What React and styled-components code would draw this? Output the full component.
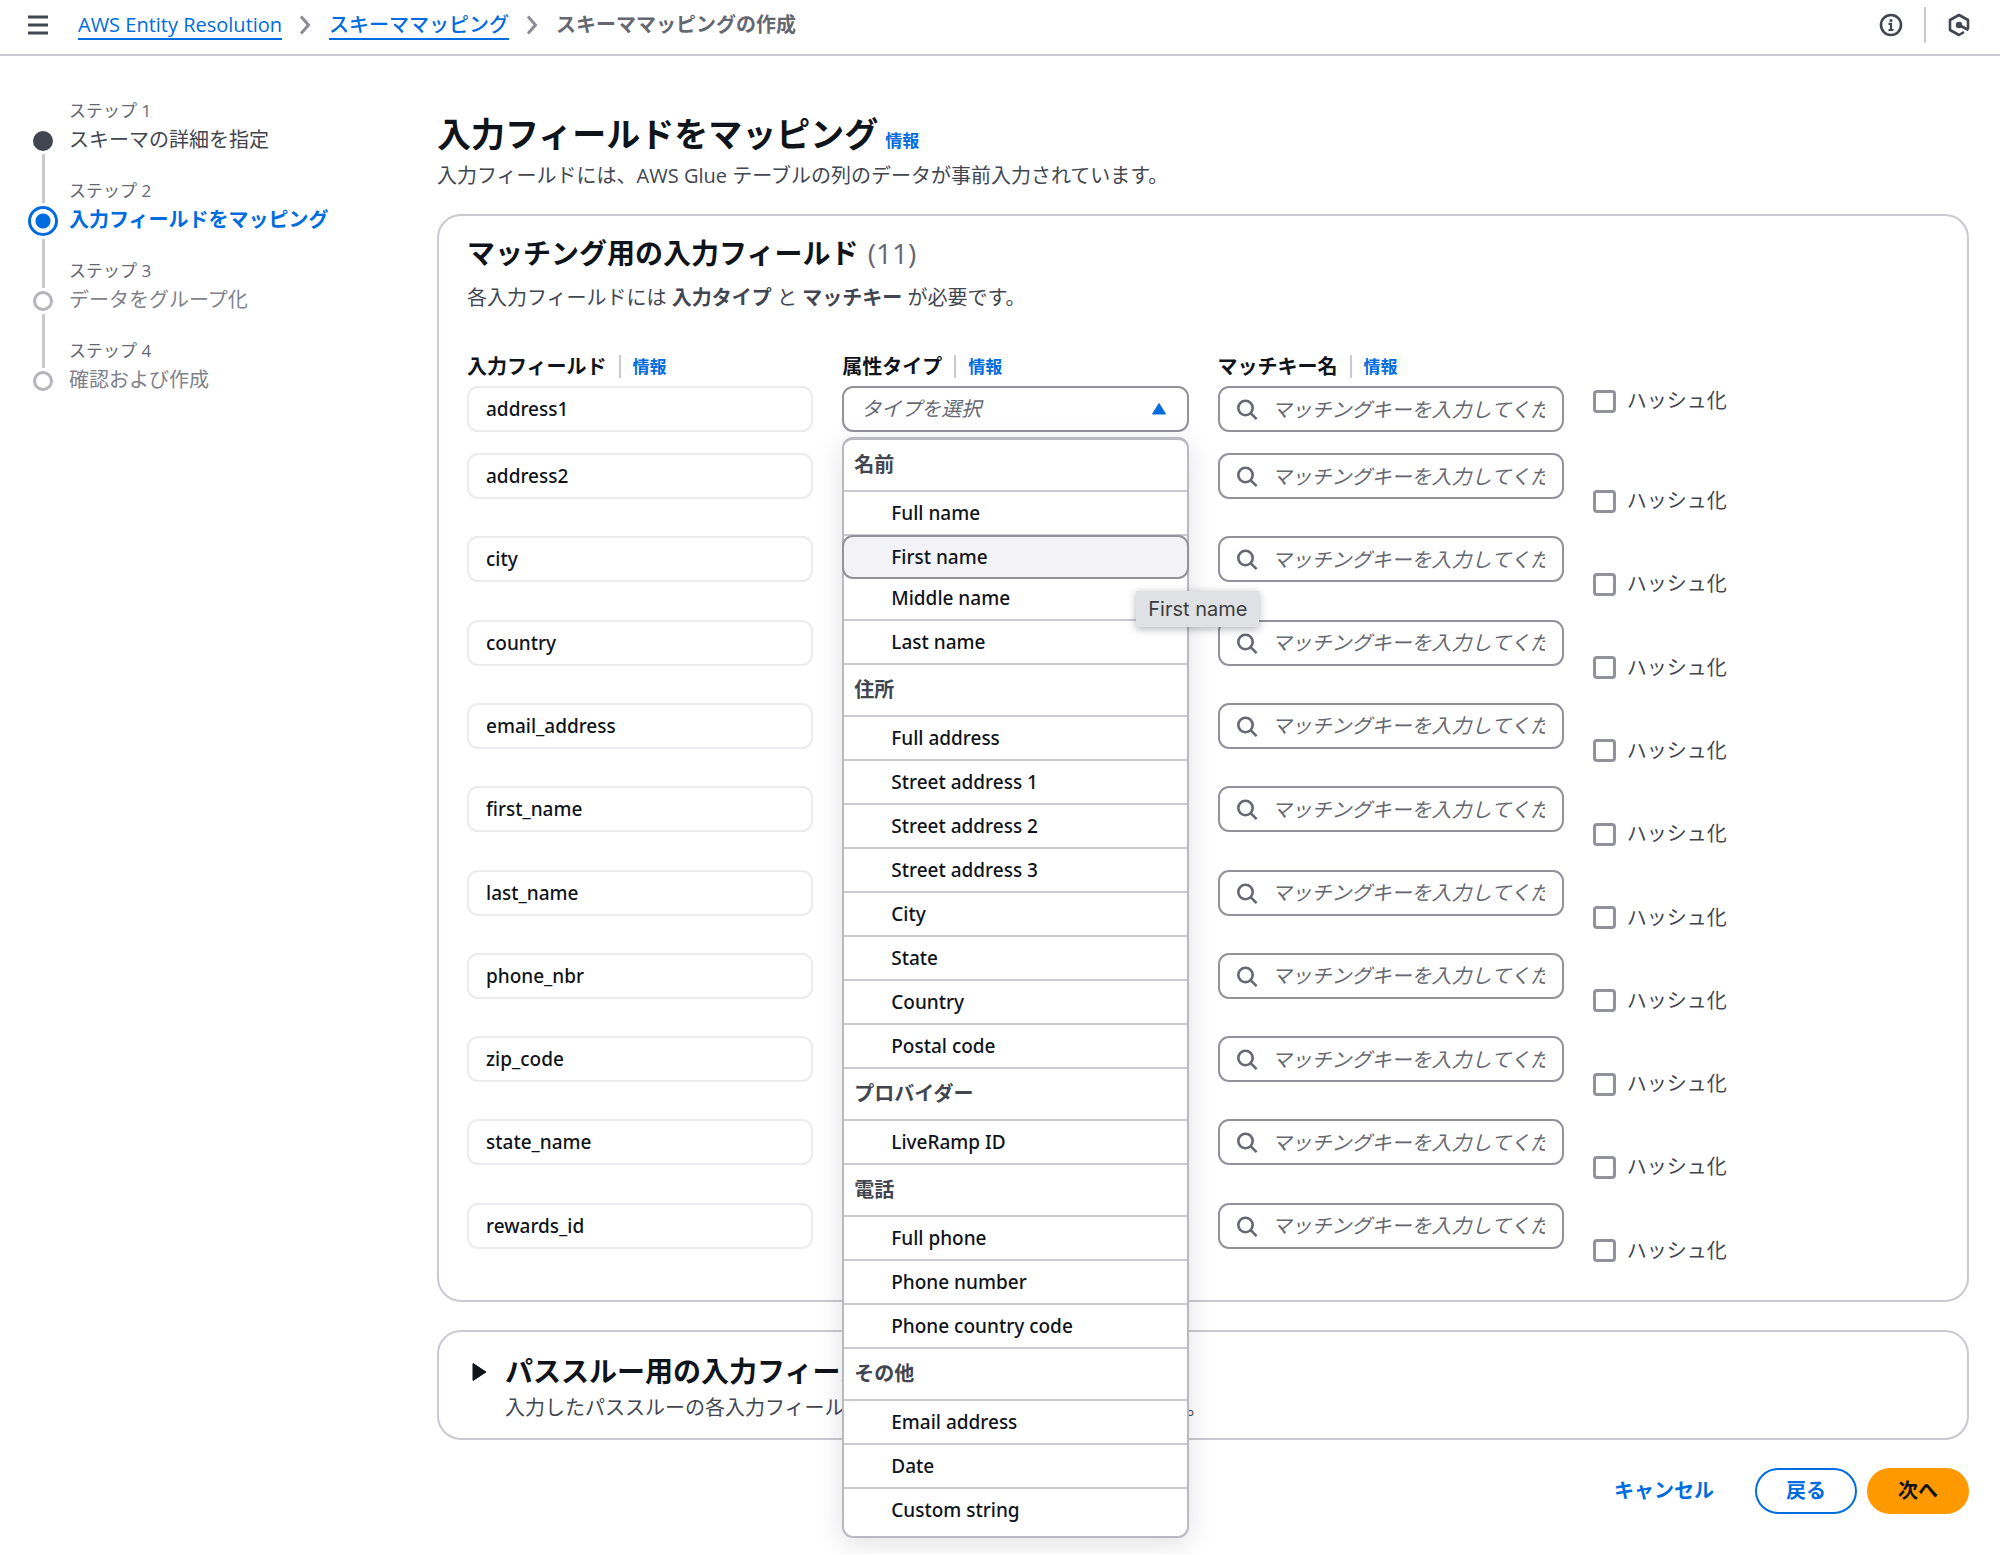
import React from "react";
import styled, { createGlobalStyle, css } from "styled-components";

const colors = {
  text: "#0f141a",
  body: "#424650",
  muted: "#656871",
  inactive: "#7f828b",
  link: "#006ce0",
  border: "#c9c9d0",
  control: "#92929b",
  disabled: "#ebebf0",
  primary: "#ff9900",
};

const latin = `"Noto Sans", "Open Sans", sans-serif`;

const GlobalStyle = createGlobalStyle`
  * {
    box-sizing: border-box;
  }

  body {
    margin: 0;
    background: #fff;
    color: ${colors.text};
    font-family: "Open Sans", "Noto Sans CJK JP", sans-serif;
    font-size: 20px;
    line-height: 28px;
  }

  h1, h2, p, ol, ul {
    margin: 0;
    padding: 0;
  }

  ol, ul {
    list-style: none;
  }

  button, input, select {
    font: inherit;
    color: inherit;
  }
`;

const Header = styled.header`
  display: flex;
  align-items: center;
  justify-content: space-between;
  height: 56px;
  padding: 0 29px 4px 27px;
  border-bottom: 2px solid ${colors.border};
`;

const HeaderGroup = styled.div`
  display: flex;
  align-items: center;
  gap: 29px;
`;

const HeaderTools = styled(HeaderGroup)`
  gap: 21px;
`;

const IconButton = styled.button`
  display: flex;
  padding: 0;
  border: 0;
  background: none;
  color: ${colors.body};
`;

const Divider = styled.span`
  width: 2px;
  height: ${({ $height }) => $height}px;
  background: ${colors.border};
`;

const Crumbs = styled.ol`
  display: flex;
  align-items: center;
`;

const Crumb = styled.li`
  display: flex;
  align-items: center;
  color: ${colors.muted};
  font-weight: ${({ $current }) => ($current ? 700 : 400)};

  > svg {
    margin: 0 17px;
  }
`;

const CrumbLink = styled.a`
  padding-top: 2px;
  border-bottom: 2px solid ${colors.link};
  color: ${colors.link};
  font-weight: 500;
  line-height: 26px;
  text-decoration: none;
`;

const Layout = styled.div`
  display: flex;
`;

const Sidebar = styled.nav`
  flex: 0 0 437px;
  padding: 42px 20px 0 28px;
`;

const Step = styled.li`
  display: flex;
  gap: 11px;
  height: 80px;
`;

const Rail = styled.div`
  display: flex;
  flex-direction: column;
  align-items: center;
  width: 30px;
`;

const RailLine = styled.span`
  width: 3px;
  ${({ $length }) => ($length ? `height: ${$length}px` : "flex: 1")};
  background: ${({ $hidden }) => ($hidden ? "transparent" : colors.border)};
`;

const Marker = styled.span`
  width: 20px;
  height: 20px;
  margin: 3px 0;
  border: 3px solid #b4b4bb;
  border-radius: 50%;

  ${({ $state }) =>
    $state === "done" &&
    css`
      border-color: ${colors.body};
      background: ${colors.body};
    `}

  ${({ $state }) =>
    $state === "active" &&
    css`
      width: 30px;
      height: 30px;
      border-color: ${colors.link};
      background: radial-gradient(circle, ${colors.link} 7px, #fff 8px);
    `}
`;

const StepLabel = styled.p`
  color: ${colors.muted};
  font-size: 17px;
  line-height: 26px;
`;

const StepTitle = styled.p`
  line-height: 32px;
  color: ${({ $state }) =>
    $state === "active"
      ? colors.link
      : $state === "done"
      ? colors.body
      : colors.inactive};
  font-weight: ${({ $state }) => ($state === "active" ? 700 : 400)};
`;

const Main = styled.main`
  flex: 1;
  min-width: 0;
  padding: 54px 31px 40px 0;
`;

const Title = styled.h1`
  font-size: 34px;
  line-height: 48px;
`;

const TitleRow = styled.div`
  display: flex;
  align-items: baseline;
  gap: 7px;
  margin-bottom: 4px;
`;

const InfoLink = styled.a`
  color: ${colors.link};
  font-size: 17px;
  font-weight: 700;
  text-decoration: none;
`;

const Description = styled.p`
  color: ${colors.body};
`;

const Card = styled.section`
  margin-top: 24px;
  padding: 17px 28px 14px;
  border: 2px solid ${colors.border};
  border-radius: 24px;

  & + & {
    margin-top: 28px;
  }
`;

const CardTitle = styled.h2`
  font-size: 28px;
  font-weight: 700;
  line-height: 40px;
`;

const Counter = styled.span`
  margin-left: 2px;
  color: ${colors.muted};
  font-weight: 400;
`;

const CardDescription = styled(Description)`
  margin-top: 11px;
`;

const Fields = styled.div`
  display: grid;
  grid-template-rows: 100px repeat(10, 1fr);
  min-height: 933px;
  margin-top: 41px;
`;

const FieldRow = styled.div`
  display: grid;
  grid-template-columns: repeat(4, 1fr);
  gap: 29px;
`;

const Cell = styled.div`
  position: relative;
  min-width: 0;
`;

const LabelRow = styled.div`
  display: flex;
  align-items: center;
  gap: 12px;
  height: 33px;
  padding-bottom: 6px;
`;

const FieldLabel = styled.label`
  font-weight: 700;
`;

const control = css`
  display: block;
  width: 100%;
  height: 46px;
  border: 2px solid ${colors.control};
  border-radius: 11px;
  background: #fff;
`;

const NameInput = styled.input`
  ${control}
  padding: 0 17px;
  border-color: ${colors.disabled};
  font-family: ${latin};
  font-size: 19px;
  font-weight: 500;
`;

const TypeSelect = styled.select`
  ${control}
  appearance: none;
  padding: 0 17px;
  color: ${colors.muted};
  font-style: italic;
`;

const SearchInput = styled.input`
  ${control}
  padding: 0 17px 0 52px;

  &::placeholder {
    color: ${colors.muted};
    font-style: italic;
    opacity: 1;
  }
`;

const ControlBox = styled.div`
  position: relative;

  > svg {
    position: absolute;
    top: 13px;
    pointer-events: none;
  }
`;

const SearchBox = styled(ControlBox)`
  > svg {
    left: 18px;
  }
`;

const SelectBox = styled(ControlBox)`
  > svg {
    right: 21px;
  }
`;

const HashLabel = styled.label`
  display: flex;
  align-items: center;
  gap: 11px;
  padding-top: 34px;
  color: ${colors.body};
`;

const Checkbox = styled.input`
  appearance: none;
  width: 23px;
  height: 23px;
  margin: 0;
  border: 3px solid ${colors.control};
  border-radius: 4px;
  background: #fff;
`;

const Menu = styled.ul`
  position: absolute;
  z-index: 2;
  top: 84px;
  left: 0;
  right: 0;
  padding-bottom: 3px;
  border: 2px solid #b9b9c1;
  border-top-width: 3px;
  border-radius: 11px;
  background: #fff;
  box-shadow: 0 6px 28px rgba(0, 7, 22, 0.12);
`;

const MenuGroup = styled.li`
  height: 52px;
  padding: 11px 10px;
  border-bottom: 2px solid ${colors.border};
  color: ${colors.body};
  font-weight: 700;
`;

const MenuOption = styled.li`
  height: 44px;
  padding: 7px 47px;
  border-bottom: 2px solid ${colors.border};
  font-family: ${latin};
  font-size: 19px;
  font-weight: 500;

  &:last-child {
    border-bottom: 0;
  }

  ${({ $highlighted }) =>
    $highlighted &&
    css`
      position: relative;
      margin: -1px -2px -2px;
      padding: 6px 47px;
      border: 2px solid ${colors.control};
      border-radius: 11px;
      background: #f3f3f7;
    `}
`;

const Tooltip = styled.div`
  position: absolute;
  z-index: 3;
  top: 238px;
  left: 294px;
  padding: 4px 12px;
  background: #e0e1e4;
  box-shadow: 0 2px 8px rgba(0, 0, 0, 0.3);
  color: #3c3d41;
  font-family: Inter, sans-serif;
  white-space: nowrap;
`;

const Expander = styled.button`
  display: flex;
  gap: 17px;
  padding: 0 5px;
  border: 0;
  background: none;
  text-align: left;

  > svg {
    margin-top: 11px;
  }
`;

const ExpandCard = styled(Card)`
  padding-top: 19px;
`;

const ExpandDescription = styled(Description)`
  margin: 3px 0 2px;
`;

const Actions = styled.div`
  display: flex;
  justify-content: flex-end;
  gap: 10px;
  margin-top: 28px;
`;

const Button = styled.button`
  height: 46px;
  padding: 0 29px;
  border: 2px solid ${({ $variant }) =>
    $variant === "primary"
      ? colors.primary
      : $variant === "link"
      ? "transparent"
      : colors.link};
  border-radius: 23px;
  background: ${({ $variant }) =>
    $variant === "primary" ? colors.primary : "#fff"};
  color: ${({ $variant }) =>
    $variant === "primary" ? colors.text : colors.link};
  font-weight: 700;
  line-height: 40px;
`;

const steps = [
  { title: "スキーマの詳細を指定", state: "done" },
  { title: "入力フィールドをマッピング", state: "active" },
  { title: "データをグループ化", state: "todo" },
  { title: "確認および作成", state: "todo" },
];

const fields = [
  "address1",
  "address2",
  "city",
  "country",
  "email_address",
  "first_name",
  "last_name",
  "phone_nbr",
  "zip_code",
  "state_name",
  "rewards_id",
];

const groups = [
  {
    name: "名前",
    options: ["Full name", "First name", "Middle name", "Last name"],
  },
  {
    name: "住所",
    options: [
      "Full address",
      "Street address 1",
      "Street address 2",
      "Street address 3",
      "City",
      "State",
      "Country",
      "Postal code",
    ],
  },
  { name: "プロバイダー", options: ["LiveRamp ID"] },
  {
    name: "電話",
    options: ["Full phone", "Phone number", "Phone country code"],
  },
  { name: "その他", options: ["Email address", "Date", "Custom string"] },
];

const MenuIcon = () => (
  <svg width="22" height="22" viewBox="0 0 22 22" stroke="currentColor" strokeWidth="3">
    <path d="M1 3h20M1 11h20M1 19h20" />
  </svg>
);

const ChevronIcon = () => (
  <svg width="13" height="20" viewBox="0 0 13 20" fill="none" stroke="#8c8c94" strokeWidth="3">
    <path d="M2 1.5l7.5 8.5L2 18.5" />
  </svg>
);

const InfoIcon = () => (
  <svg width="24" height="24" viewBox="0 0 24 24" fill="none" stroke="currentColor">
    <circle cx="12" cy="12" r="10" strokeWidth="2.6" />
    <path d="M9.5 10.8H12V17M9.5 17h5" strokeWidth="2.2" />
    <path d="M12 6.2v2.6" strokeWidth="2.8" />
  </svg>
);

const HexIcon = () => (
  <svg width="24" height="24" viewBox="0 0 24 24" fill="none" stroke="currentColor">
    <path d="M21 16V7l-9-5-9 5v10l9 5 5-3" strokeWidth="2.6" strokeLinejoin="round" />
    <circle cx="12" cy="12" r="3.2" fill="currentColor" stroke="none" />
    <path d="M12 12l9.5 5" strokeWidth="2.8" />
  </svg>
);

const SearchIcon = () => (
  <svg width="22" height="22" viewBox="0 0 22 22" fill="none" stroke="#656871" strokeWidth="2.6">
    <circle cx="9.5" cy="9" r="7.2" />
    <path d="M14.6 14.2l6 6" />
  </svg>
);

const CaretUp = () => (
  <svg width="16" height="20" viewBox="0 0 16 20">
    <path d="M7 4.5l6.5 10.5h-13z" fill={colors.link} stroke={colors.link} strokeLinejoin="round" />
  </svg>
);

const CaretRight = () => (
  <svg width="16" height="20" viewBox="0 0 16 20">
    <path d="M1 1.5l13 8.5-13 8.5z" fill={colors.text} stroke={colors.text} strokeLinejoin="round" />
  </svg>
);

function ColumnLabel({ htmlFor, children }) {
  return (
    <LabelRow>
      <FieldLabel htmlFor={htmlFor}>{children}</FieldLabel>
      <Divider $height={23} />
      <InfoLink href="#info">情報</InfoLink>
    </LabelRow>
  );
}

function TypeMenu() {
  return (
    <Menu role="listbox" aria-label="属性タイプ">
      {groups.map((group) => (
        <React.Fragment key={group.name}>
          <MenuGroup role="presentation">{group.name}</MenuGroup>
          {group.options.map((option) => (
            <MenuOption
              key={option}
              role="option"
              aria-selected="false"
              $highlighted={option === "First name"}
            >
              {option}
            </MenuOption>
          ))}
        </React.Fragment>
      ))}
    </Menu>
  );
}

function Field({ name, first }) {
  return (
    <FieldRow>
      <Cell>
        {first && (
          <ColumnLabel htmlFor={`name-${name}`}>入力フィールド</ColumnLabel>
        )}
        <NameInput
          id={`name-${name}`}
          aria-label="入力フィールド"
          value={name}
          readOnly
        />
      </Cell>
      <Cell>
        {first && (
          <ColumnLabel htmlFor={`type-${name}`}>属性タイプ</ColumnLabel>
        )}
        <SelectBox>
          <TypeSelect id={`type-${name}`} aria-label="属性タイプ">
            <option>タイプを選択</option>
          </TypeSelect>
          <CaretUp />
        </SelectBox>
        {first && <TypeMenu />}
        {first && <Tooltip role="tooltip">First name</Tooltip>}
      </Cell>
      <Cell>
        {first && (
          <ColumnLabel htmlFor={`key-${name}`}>マッチキー名</ColumnLabel>
        )}
        <SearchBox>
          <SearchIcon />
          <SearchInput
            id={`key-${name}`}
            aria-label="マッチキー名"
            placeholder="マッチングキーを入力してください"
          />
        </SearchBox>
      </Cell>
      <Cell>
        <HashLabel>
          <Checkbox type="checkbox" />
          ハッシュ化
        </HashLabel>
      </Cell>
    </FieldRow>
  );
}

function App() {
  return (
    <>
      <GlobalStyle />
      <Header>
        <HeaderGroup>
          <IconButton aria-label="メニュー">
            <MenuIcon />
          </IconButton>
          <Crumbs>
            <Crumb>
              <CrumbLink href="#home">AWS Entity Resolution</CrumbLink>
              <ChevronIcon />
            </Crumb>
            <Crumb>
              <CrumbLink href="#schema">スキーママッピング</CrumbLink>
              <ChevronIcon />
            </Crumb>
            <Crumb $current>スキーママッピングの作成</Crumb>
          </Crumbs>
        </HeaderGroup>
        <HeaderTools>
          <IconButton aria-label="情報">
            <InfoIcon />
          </IconButton>
          <Divider $height={36} />
          <IconButton aria-label="設定">
            <HexIcon />
          </IconButton>
        </HeaderTools>
      </Header>
      <Layout>
        <Sidebar>
          <ol>
            {steps.map(({ title, state }, i) => (
              <Step key={title}>
                <Rail>
                  <RailLine
                    $length={state === "active" ? 25 : 30}
                    $hidden={i === 0}
                  />
                  <Marker $state={state} />
                  <RailLine $hidden={i === steps.length - 1} />
                </Rail>
                <div>
                  <StepLabel>ステップ {i + 1}</StepLabel>
                  <StepTitle $state={state}>{title}</StepTitle>
                </div>
              </Step>
            ))}
          </ol>
        </Sidebar>
        <Main>
          <TitleRow>
            <Title>入力フィールドをマッピング</Title>
            <InfoLink href="#info">情報</InfoLink>
          </TitleRow>
          <Description>
            入力フィールドには、AWS Glue
            テーブルの列のデータが事前入力されています。
          </Description>
          <Card>
            <CardTitle>
              マッチング用の入力フィールド <Counter>(11)</Counter>
            </CardTitle>
            <CardDescription>
              各入力フィールドには <b>入力タイプ</b> と <b>マッチキー</b>{" "}
              が必要です。
            </CardDescription>
            <Fields>
              {fields.map((name, i) => (
                <Field key={name} name={name} first={i === 0} />
              ))}
            </Fields>
          </Card>
          <ExpandCard>
            <Expander aria-expanded="false">
              <CaretRight />
              <div>
                <CardTitle as="div">パススルー用の入力フィールド</CardTitle>
                <ExpandDescription>
                  入力したパススルーの各入力フィールドは、出力テーブル にも追加されます。
                </ExpandDescription>
              </div>
            </Expander>
          </ExpandCard>
          <Actions>
            <Button $variant="link">キャンセル</Button>
            <Button>戻る</Button>
            <Button $variant="primary">次へ</Button>
          </Actions>
        </Main>
      </Layout>
    </>
  );
}

export default App;
